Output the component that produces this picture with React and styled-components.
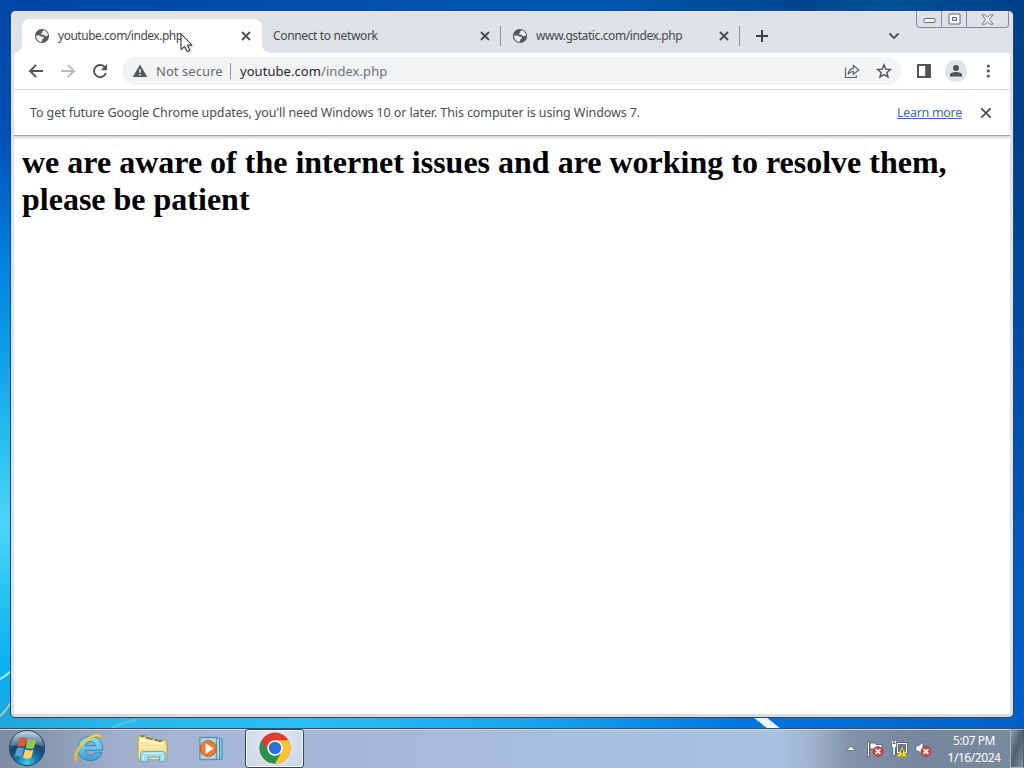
import React from "react";
import styled, { createGlobalStyle } from "styled-components";

const GlobalStyle = createGlobalStyle`
  * {
    box-sizing: border-box;
  }

  body {
    margin: 0;
    overflow: hidden;
    font-family: "Noto Sans", "Open Sans", sans-serif;
  }

  svg {
    display: block;
    flex: none;
  }
`;

const Desktop = styled.div`
  position: relative;
  width: 1024px;
  height: 768px;
  display: flex;
  flex-direction: column;
  background:
    linear-gradient(90deg, #20a5df 0, #28b9ec 13%, #27bff5 30%, #15a5f0 52%, #0078e2 72%, #0060c8 100%) 0 716px / 100% 14px no-repeat,
    linear-gradient(#0047a6 0, #004fb8 19%, #0081dc 36%, #0c9ee7 49%, #28bfee 62%, #4cd5f8 73%, #1cbcf0 86%, #08b0f0 94%, #20a5df 100%) 0 0 / 14px 718px no-repeat,
    linear-gradient(#00408a 0, #003f86 20%, #004ca5 48%, #0058ba 75%, #0060c8 100%) 100% 0 / 16px 718px no-repeat,
    linear-gradient(90deg, #0044a4 0, #0050a9 30%, #0056ad 60%, #00468e 78%, #004f94 87%, #00408a 100%);
`;

const Streaks = styled.svg`
  position: absolute;
  left: 0;
  top: 0;
`;

const Window = styled.div`
  position: relative;
  width: 1004px;
  height: 708px;
  margin: 10px 0 0 10px;
  padding: 0 3px 3px;
  display: flex;
  flex-direction: column;
  background: linear-gradient(#dee1e6 0, #d9e3f0 30%, #dbe5f2 96%, #d9dddf 100%);
  border: 1px solid #27486d;
  border-radius: 6px 6px 5px 5px;
`;

const TabStrip = styled.div`
  height: 42px;
  margin: 0 -3px;
  padding: 8px 0 0 11px;
  display: flex;
  background: #dee1e6;
  border-radius: 5px 5px 0 0;
`;

const Tab = styled.div`
  position: relative;
  width: ${(props) => props.$width}px;
  height: 34px;
  padding: 0 ${(props) => (props.$active ? 9 : 8)}px 0 ${(props) => (props.$active ? 12 : 11)}px;
  display: flex;
  align-items: center;
  border-radius: 8px 8px 0 0;
  background: ${(props) => (props.$active ? "#fff" : "transparent")};

  &::before,
  &::after {
    content: "";
    display: ${(props) => (props.$active ? "block" : "none")};
    position: absolute;
    bottom: 0;
    width: 8px;
    height: 8px;
  }
  &::before {
    left: -8px;
    background: radial-gradient(circle at 0 0, transparent 7.5px, #fff 8px);
  }
  &::after {
    right: -8px;
    background: radial-gradient(circle at 100% 0, transparent 7.5px, #fff 8px);
  }
`;

const TabTitle = styled.span`
  flex: 1;
  margin-left: ${(props) => (props.$bare ? 0 : 8)}px;
  color: #45494d;
  font-size: 12px;
  line-height: 16px;
  letter-spacing: ${(props) => props.$spacing}px;
  white-space: nowrap;
`;

const Divider = styled.div`
  width: 1px;
  height: ${(props) => props.$height}px;
  margin-top: ${(props) => props.$top || 0}px;
  background: #8c9096;
`;

const PlainButton = styled.button`
  padding: 0;
  border: 0;
  background: none;
  flex: none;
`;

const NewTab = styled(PlainButton)`
  width: 28px;
  height: 28px;
  margin: 3px 0 0 8px;
  display: flex;
  align-items: center;
  justify-content: center;
`;

const TabSearch = styled(NewTab)`
  margin-left: 104px;
`;

const Caption = styled.div`
  height: 17px;
  width: 93px;
  margin: -8px 0 0 8px;
  display: flex;
  border: 1px solid #858a93;
  border-top: 0;
  border-radius: 0 0 4px 4px;
`;

const CaptionButton = styled(PlainButton)`
  width: ${(props) => props.$width}px;
  padding-top: ${(props) => props.$drop || 0}px;
  display: flex;
  align-items: center;
  justify-content: center;
  border-right: ${(props) => (props.$last ? "0" : "1px solid #858a93")};
`;

const Toolbar = styled.div`
  height: 37px;
  padding: 0 14px 1px 14px;
  display: flex;
  align-items: center;
  background: #fff;
  border-bottom: 1px solid #d9dadc;
`;

const Nav = styled.div`
  width: 94px;
  flex: none;
  display: flex;
  gap: 16px;
`;

const Omnibox = styled.div`
  width: 779px;
  height: 28px;
  padding: 0 9px 0 10px;
  flex: none;
  display: flex;
  align-items: center;
  background: #f1f3f4;
  border-radius: 14px;
  font-size: 13px;
  line-height: 20px;
  letter-spacing: 0.06px;
  white-space: nowrap;
`;

const Security = styled.span`
  width: 74px;
  margin-left: 8px;
  color: #686c70;
`;

const Address = styled.span`
  flex: 1;
  margin-left: 9px;
  color: #6d7175;

  b {
    color: #25282c;
    font-weight: 400;
  }
`;

const Actions = styled.div`
  margin-left: 15px;
  display: flex;
  align-items: center;
`;

const Avatar = styled.div`
  width: 22px;
  height: 22px;
  margin: 0 13px;
  display: flex;
  align-items: center;
  justify-content: center;
  background: #dfe2e7;
  border-radius: 50%;
`;

const InfoBar = styled.div`
  height: 46px;
  padding: 0 17px 0 16px;
  display: flex;
  align-items: center;
  background: #fff;
  border-bottom: 1px solid #a4a4a4;
  color: #4a4d51;
  font-size: 12.5px;
  line-height: 18px;
  white-space: nowrap;
`;

const InfoText = styled.span`
  flex: 1;
  letter-spacing: -0.1px;
`;

const Link = styled.a`
  width: 65px;
  margin-right: 17px;
  color: #3c6cbd;
  letter-spacing: -0.3px;
  text-decoration: underline;
`;

const Page = styled.div`
  flex: 1;
  padding: 8px;
  background: linear-gradient(#d6d6d6 0, #fff 4px);
`;

const Heading = styled.h1`
  margin: 0;
  color: #000;
  font: bold 32px/37px "Liberation Serif", serif;
`;

const Taskbar = styled.div`
  height: 40px;
  margin-top: auto;
  display: flex;
  position: relative;
  border-top: 1px solid #354f6c;
  box-shadow: inset 0 1px #c9d8e7;
  background: linear-gradient(
    90deg,
    #7c8ba2 0,
    #8999b2 5%,
    #a1b1cd 12%,
    #a6b7d7 22%,
    #a5b7d8 34%,
    #a8bfde 55%,
    #a9c2e0 76%,
    #a0b5ce 79%,
    #8393a9 83%,
    #75879c 90%,
    #7a899e 100%
  );
`;

const TaskButton = styled(PlainButton)`
  width: ${(props) => props.$width}px;
  height: 39px;
  padding-bottom: 1px;
  display: flex;
  align-items: center;
  justify-content: center;
`;

const ActiveTask = styled(TaskButton)`
  background: radial-gradient(circle at 50% 30%, #e9eef6, #d5dfeb 55%, #c9d6e7);
  border: 1px solid #34475c;
  border-radius: 3px;
  box-shadow: inset 0 0 0 1px #f3f7fb;
`;

const Tray = styled.div`
  flex: 1;
  display: flex;
  align-items: center;
  justify-content: flex-end;
`;

const Clock = styled.div`
  width: 66px;
  margin: 1px 3px 0 9px;
  color: #fff;
  font-size: 12px;
  line-height: 17px;
  letter-spacing: -0.45px;
  text-align: center;
  white-space: nowrap;
`;

const ShowDesktop = styled.div`
  width: 14px;
  height: 39px;
  border: 1px solid #a8b4c1;
  border-right-color: #4e5d6f;
  background: linear-gradient(110deg, #8c9baa, #4d6172 48%, #637587 70%, #8493a4);
`;

const Pointer = styled.svg`
  position: absolute;
  left: 180px;
  top: 33px;
  filter: drop-shadow(1px 1px 1px rgba(0, 0, 0, 0.3));
`;

const Globe = () => (
  <svg width="16" height="16" viewBox="0 0 16 16">
    <circle cx="8" cy="8" r="7.1" fill="#55595e" />
    <path
      d="M8.3 3.2l1.9-1C12.4 3 13.9 5 14 7.4l-1.3.9-1.9-.3-1-1.2H7.9L6.6 5.5l1.7-.8z"
      fill="#eceef0"
    />
    <path
      d="M2 7.5l3.7.1 2.1 1.2h1.9v1.6L8.2 11.6v1.2L7.3 14C4.3 13.6 2 11 2 7.5z"
      fill="#eceef0"
    />
  </svg>
);

const Cross = ({ size = 16, inset = 4, weight = 1.9 }) => (
  <svg width={size} height={size} viewBox={`0 0 ${size} ${size}`}>
    <path
      d={`M${inset} ${inset}L${size - inset} ${size - inset}M${size - inset} ${inset}L${inset} ${size - inset}`}
      stroke="#4b4f54"
      strokeWidth={weight}
      fill="none"
    />
  </svg>
);

const BackArrow = () => (
  <svg width="16" height="16" viewBox="0 0 16 16" fill="none" stroke="#505459" strokeWidth="1.9">
    <path d="M15 8H2.3M8.2 1.8L2 8l6.2 6.2" />
  </svg>
);

const ForwardArrow = () => (
  <svg width="16" height="16" viewBox="0 0 16 16" fill="none" stroke="#b8babd" strokeWidth="1.9">
    <path d="M1 8h12.7M7.8 1.8L14 8l-6.2 6.2" />
  </svg>
);

const Reload = () => (
  <svg width="16" height="16" viewBox="0 0 16 16">
    <path
      d="M13.9 10A6.1 6.1 0 1 1 12.4 3.7L13.6 5"
      fill="none"
      stroke="#505459"
      strokeWidth="1.9"
    />
    <path d="M15 1v6.2H8.8z" fill="#505459" />
  </svg>
);

const Warning = () => (
  <svg width="16" height="16" viewBox="0 0 16 16">
    <path d="M8 1.5L15.3 14H.7z" fill="#55595e" />
    <path d="M7.2 6h1.6v3.8H7.2zM7.2 11h1.6v1.6H7.2z" fill="#f1f3f4" />
  </svg>
);

const Share = () => (
  <svg width="16" height="16" viewBox="0 0 16 16" fill="none" stroke="#5f6368" strokeWidth="1.2">
    <path d="M1.5 4.5v10h10.8v-2.2" />
    <path d="M4 11.3C4.4 7.8 6.4 6 9.4 5.7V2.5L14.8 7l-5.4 4.2V8.5c-2.3 0-4 .8-5.4 2.8z" />
  </svg>
);

const Star = () => (
  <svg width="16" height="16" viewBox="0 0 16 16">
    <path
      d="M8 1.9l1.8 4.2 4.6.4-3.5 3 1.1 4.5-4-2.4L4 14l1.1-4.5-3.5-3 4.6-.4z"
      fill="none"
      stroke="#505459"
      strokeWidth="1.4"
    />
  </svg>
);

const SidePanel = () => (
  <svg width="16" height="16" viewBox="0 0 16 16">
    <path d="M1 1h14v14H1zM3 3v10h6.2V3z" fillRule="evenodd" fill="#505459" />
  </svg>
);

const Orb = () => (
  <svg width="38" height="38" viewBox="0 0 38 38">
    <defs>
      <radialGradient id="orb" cx=".5" cy=".92" r=".9">
        <stop offset="0" stopColor="#36d5ec" />
        <stop offset=".32" stopColor="#1778af" />
        <stop offset=".62" stopColor="#174467" />
        <stop offset="1" stopColor="#859fb9" />
      </radialGradient>
      <linearGradient id="orbGloss" x2="0" y2="1">
        <stop offset="0" stopColor="#d0e1ed" stopOpacity=".85" />
        <stop offset="1" stopColor="#8bafcc" stopOpacity=".3" />
      </linearGradient>
    </defs>
    <circle cx="19" cy="19" r="17.6" fill="url(#orb)" stroke="#234561" />
    <path d="M3 17C3 8 10 2.2 19 2.2S35 8 35 17c-9-3-20-1-32 0z" fill="url(#orbGloss)" />
    <path d="M11.6 9c2.8-1.5 5-1.1 7 .3l-2.3 8.8c-2.2-1.4-4.6-1.4-7 0z" fill="#e45b2b" />
    <path d="M19.9 10c2.9 1.4 5.4 1.3 8.3.2l-2.3 8.7c-2.7 1.2-5.4 1.2-8.3-.1z" fill="#94c84b" />
    <path d="M8.8 19.6c2.4-1.4 4.8-1.4 7 0l-2.2 8.5c-2.2-1.5-4.5-1.4-7-.1z" fill="#5c9ed4" />
    <path d="M17.2 20.3c2.8 1.4 5.4 1.4 8.3.2l-2.3 8.3c-2.6 1.3-5.3 1.2-8.2 0z" fill="#fbd05b" />
  </svg>
);

const InternetExplorer = () => (
  <svg width="34" height="34" viewBox="0 0 34 34">
    <defs>
      <linearGradient id="ie" x2="0" y2="1">
        <stop offset="0" stopColor="#8addf7" />
        <stop offset=".55" stopColor="#5fc2ec" />
        <stop offset="1" stopColor="#3797d3" />
      </linearGradient>
    </defs>
    <path
      d="M30.7 19.2H13.3c.3 3.2 2.2 5.1 5.1 5.1 2.3 0 3.8-.8 4.7-2.5h7c-1.8 5.1-6 7.9-11.8 7.9C11 29.7 5.7 25 5.7 17.8c0-7.4 5.2-12.3 12.6-12.3 7.7 0 12.4 5.2 12.4 13.7zM13.4 14.8h10c-.4-2.7-2.1-4.3-4.9-4.3-2.7 0-4.5 1.6-5.1 4.3z"
      fill="url(#ie)"
      fillRule="evenodd"
      stroke="#287ba9"
      strokeWidth=".8"
    />
    <path
      d="M28.7 6.4C29 2 19.2 4.1 11.8 11.2 5.2 17.5 1.1 26.6 4.8 29.5"
      fill="none"
      stroke="#eabd2e"
      strokeWidth="2.8"
    />
    <path
      d="M26.5 4.2C21.5 3.8 13.4 8.4 8.6 14.5"
      fill="none"
      stroke="#fbe56c"
      strokeWidth="1"
    />
  </svg>
);

const Explorer = () => (
  <svg width="32" height="31" viewBox="0 0 34 32">
    <path d="M2 3l1-1h7l1 3h8l1 2h12l1 2v19H2z" fill="#e9ce74" stroke="#b69b4b" />
    <path d="M4 4h5l1 2h8l1 2h11v4H4z" fill="#fff5be" />
    <path d="M5 3h4M14 6h4M23 8h5" stroke="#43a348" strokeWidth="2" />
    <path d="M11 5h3M20 7h3" stroke="#d65335" strokeWidth="2" />
    <path d="M3 9h11l2 2h16v16H3z" fill="#f8e596" />
    <path d="M4 12h25M4 15h22" stroke="#fff3b5" />
    <path
      d="M9 30H5v-8c0-2 1-3 3-3h20c2 0 3 1 3 3v8h-6v-5H13v5z"
      fill="#a2dbee"
      stroke="#58a5c8"
    />
    <path d="M8 21h20M8 23v5M28 23v5" stroke="#e2faff" />
  </svg>
);

const MediaPlayer = () => (
  <svg width="28" height="27" viewBox="0 0 30 28">
    <path d="M14 3l12 1v22l-12-1z" fill="#82bddc" stroke="#4f91b8" />
    <path d="M11 2l12 1v23l-12-1z" fill="#b0ddf1" stroke="#4384aa" />
    <path d="M2 2h18v24H2z" fill="#91c8e5" stroke="#4b88aa" />
    <path d="M4 4h14v20H4z" fill="#b8e0ef" />
    <circle cx="11" cy="14" r="8.6" fill="#ed7d2d" stroke="#be5620" />
    <path d="M8.2 8.5l8.5 5.5-8.5 5.5z" fill="#fff" />
  </svg>
);

const Chrome = () => (
  <svg width="32" height="32" viewBox="0 0 32 32">
    <circle cx="16" cy="16" r="15.5" fill="#e33b2e" />
    <path d="M2.58 8.25A15.5 15.5 0 0 0 16 31.5l6.7-11.6L16 16 9.3 19.9z" fill="#299449" />
    <path d="M16 31.5A15.5 15.5 0 0 0 29.42 8.25H16V16l6.7 3.9z" fill="#fbc52c" />
    <circle cx="16" cy="16" r="7.8" fill="#fff" />
    <circle cx="16" cy="16" r="6.2" fill="#2870df" />
  </svg>
);

const ErrorBadge = ({ x }) => (
  <g>
    <circle cx={x} cy="11.5" r="5" fill="#d9413c" stroke="#a92c2b" strokeWidth=".6" />
    <path d={`M${x - 2.4} 9.1l4.8 4.8m0-4.8l-4.8 4.8`} stroke="#fff" strokeWidth="1.7" />
  </g>
);

const TrayIcons = () => (
  <svg width="86" height="18" viewBox="0 0 86 18">
    <path d="M.5 10.5L4.8 6l4.3 4.5z" fill="#fff" stroke="#536477" strokeWidth=".7" />
    <path d="M21.5 1.5h2v15h-2z" fill="#fff" stroke="#35475b" strokeWidth=".7" />
    <path d="M24 3h5l1 1.5h6V10h-5l-1-1h-6z" fill="#fff" stroke="#35475b" strokeWidth=".7" />
    <ErrorBadge x={32} />
    <path d="M51.5 3.7h9v8.6h-9z" fill="#657b8f" stroke="#34465a" strokeWidth="2.4" />
    <path d="M51.5 3.7h9v8.6h-9z" fill="none" stroke="#fff" strokeWidth="1.2" />
    <path d="M45.4 3.5h5.2v4h-1.3l-.2 8.5h-2.2l-.2-8.5h-1.3z" fill="#fff" stroke="#34465a" strokeWidth=".7" />
    <path d="M46.5 1v2.5M49.5 1v2.5" stroke="#fff" strokeWidth="1.2" />
    <path d="M56 7l5 9.5H51z" fill="#f2e21a" stroke="#a79822" strokeWidth=".7" />
    <path d="M56 10v3M56 14.3v1" stroke="#30301d" strokeWidth="1.2" />
    <path d="M70 6h2.5L77 2v13l-4.5-4H70z" fill="#fff" stroke="#4e5f70" strokeWidth=".7" />
    <ErrorBadge x={80} />
  </svg>
);

const tabs = [
  { title: "youtube.com/index.php", width: 240, active: true, spacing: -0.48 },
  { title: "Connect to network", width: 238, bare: true, spacing: -0.35 },
  { title: "www.gstatic.com/index.php", width: 238, spacing: -0.41 },
];

const BrowserTab = ({ title, width, active, bare, spacing }) => (
  <Tab $width={width} $active={active}>
    {!bare && <Globe />}
    <TabTitle $bare={bare} $spacing={spacing}>
      {title}
    </TabTitle>
    <Cross size={14} inset={3} />
  </Tab>
);

const CaptionControls = () => (
  <Caption>
    <CaptionButton $width={25} $drop={2}>
      <svg width="13" height="8" viewBox="0 0 13 8">
        <rect x="1" y="2.5" width="11" height="4" rx="1" fill="#fff" stroke="#606873" />
      </svg>
    </CaptionButton>
    <CaptionButton $width={25}>
      <svg width="13" height="12" viewBox="0 0 13 12">
        <path d="M1 1h11v10H1zM4.5 4.5v3h4v-3z" fill="#fff" fillRule="evenodd" stroke="#606873" />
      </svg>
    </CaptionButton>
    <CaptionButton $width={40} $last>
      <svg width="13" height="11" viewBox="0 0 13 11">
        <path
          d="M1 .8h3.1l2.4 2.6L8.9.8H12L8.3 5.5l3.7 4.7H8.9L6.5 7.6l-2.4 2.6H1l3.7-4.7z"
          fill="#fff"
          stroke="#606873"
          strokeWidth=".9"
        />
      </svg>
    </CaptionButton>
  </Caption>
);

const App = () => {
  return (
    <Desktop>
      <GlobalStyle />
      <Streaks width="1024" height="730">
        <path d="M0 679q6-3 11-8" stroke="#b6ecfb" strokeWidth="2" fill="none" />
        <path d="M0 716q6-5 11-14" stroke="#a9db9b" strokeWidth="1.6" fill="none" />
        <path d="M112 728q12-6 24-8" stroke="#4cc6e0" strokeWidth="2.4" fill="none" />
        <path d="M753 717h13l15 12h-13z" fill="#e9f8ff" />
      </Streaks>
      <Window>
        <TabStrip>
          <BrowserTab {...tabs[0]} />
          <BrowserTab {...tabs[1]} />
          <Divider $height={20} $top={7} />
          <BrowserTab {...tabs[2]} />
          <Divider $height={20} $top={7} />
          <NewTab>
            <svg width="14" height="14" viewBox="0 0 14 14">
              <path d="M7 1v12M1 7h12" stroke="#3c4043" strokeWidth="2" />
            </svg>
          </NewTab>
          <TabSearch>
            <svg width="12" height="8" viewBox="0 0 12 8">
              <path d="M1.5 1.5L6 6l4.5-4.5" fill="none" stroke="#4b4f54" strokeWidth="1.9" />
            </svg>
          </TabSearch>
          <CaptionControls />
        </TabStrip>
        <Toolbar>
          <Nav>
            <BackArrow />
            <ForwardArrow />
            <Reload />
          </Nav>
          <Omnibox>
            <Warning />
            <Security>Not secure</Security>
            <Divider $height={16} />
            <Address>
              <b>youtube.com</b>/index.php
            </Address>
            <Share />
            <svg width="16" height="1" />
            <Star />
          </Omnibox>
          <Actions>
            <SidePanel />
            <Avatar>
              <svg width="14" height="14" viewBox="0 0 14 14" fill="#505459">
                <circle cx="7" cy="4.1" r="3" />
                <path d="M1 12.5v-1.7C1 8.9 4.5 8 7 8s6 .9 6 2.8v1.7z" />
              </svg>
            </Avatar>
            <svg width="16" height="16" viewBox="0 0 16 16" fill="#505459">
              <circle cx="8.3" cy="3" r="1.6" />
              <circle cx="8.3" cy="8" r="1.6" />
              <circle cx="8.3" cy="13" r="1.6" />
            </svg>
          </Actions>
        </Toolbar>
        <InfoBar>
          <InfoText>
            To get future Google Chrome updates, you'll need Windows 10 or later. This computer is using Windows 7.
          </InfoText>
          <Link>Learn more</Link>
          <Cross size={14} inset={2.3} weight={1.8} />
        </InfoBar>
        <Page>
          <Heading>
            we are aware of the internet issues and are working to resolve them, please be patient
          </Heading>
        </Page>
      </Window>
      <Taskbar>
        <TaskButton $width={54}>
          <Orb />
        </TaskButton>
        <TaskButton $width={70}>
          <InternetExplorer />
        </TaskButton>
        <TaskButton $width={55}>
          <Explorer />
        </TaskButton>
        <TaskButton $width={66}>
          <MediaPlayer />
        </TaskButton>
        <ActiveTask $width={59}>
          <Chrome />
        </ActiveTask>
        <Tray>
          <TrayIcons />
          <Clock>
            5:07 PM
            <br />
            1/16/2024
          </Clock>
          <ShowDesktop />
        </Tray>
      </Taskbar>
      <Pointer width="14" height="21" viewBox="0 0 14 21">
        <path
          d="M1 1v15.5l3.5-3.4 2.6 5.4 2.7-1.2-2.5-5.2H12z"
          fill="#fff"
          stroke="#222"
          strokeWidth="1"
        />
      </Pointer>
    </Desktop>
  );
};

export default App;
